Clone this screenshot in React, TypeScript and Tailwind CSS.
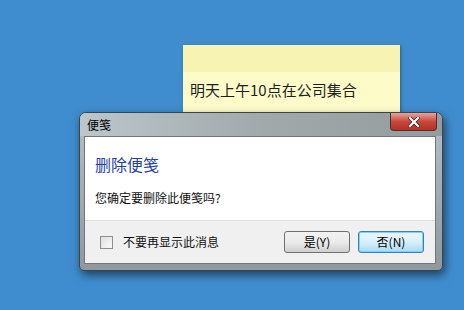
import React from "react";

const font = { fontFamily: '"Noto Sans CJK SC", "Noto Sans", sans-serif' };

export default function App() {
  return (
    <div
      className="relative w-[464px] h-[310px] overflow-hidden bg-[#3f8dcf]"
      style={font}
    >
      {/* sticky note */}
      <div className="absolute left-[183px] top-[45px] w-[217px] h-[80px] flex flex-col shadow-[1px_1px_3px_rgba(0,0,0,0.35)]">
        <div className="h-[27px] bg-[#f7f3b3]" />
        <div className="flex-1 bg-[#fdfcc9] pl-[7px] pt-[8px] text-[15px] leading-[20px] text-[#1e1e1e]">
          明天上午10点在公司集合
        </div>
      </div>

      {/* dialog window */}
      <div className="absolute left-[79px] top-[112px] w-[364px] h-[159px] rounded-t-[7px] rounded-b-[5px] border border-[#3d4448] bg-gradient-to-b from-[#b5c0c6] via-[#a3acb0] to-[#8f989c] shadow-[2px_4px_10px_rgba(0,0,0,0.55)] flex flex-col">
        {/* title bar */}
        <div className="relative h-[23px] flex items-center pl-[7px] text-[12px] text-black bg-gradient-to-r from-[#bcc6cb] via-[#a1a9ab] to-[#959c9e] rounded-t-[6px]">
          <span className="pt-[1px]">便笺</span>
          <div className="absolute right-[5px] top-0 w-[47px] h-[18px] rounded-b-[4px] border border-t-0 border-[#5a2a25] bg-gradient-to-b from-[#e6a49b] via-[#c9473d] to-[#b23226] flex items-center justify-center">
            <svg width="12" height="10" viewBox="0 0 12 10">
              <path d="M2 1 L10 9 M10 1 L2 9" stroke="#3a1a16" strokeWidth="3.6" strokeLinecap="square" />
              <path d="M2 1 L10 9 M10 1 L2 9" stroke="#ffffff" strokeWidth="2.2" strokeLinecap="square" />
            </svg>
          </div>
        </div>
        {/* client area */}
        <div className="mx-[4px] mr-[6px] mb-[6px] flex-1 flex flex-col border border-[#6f777b] bg-white">
          <div className="flex-1 flex flex-col pl-[10px] bg-white">
            <div className="mt-[17px] text-[16px] leading-[20px] text-[#1f3fa6]">删除便笺</div>
            <div className="mt-[16px] text-[12px] leading-[16px] text-[#111]">您确定要删除此便笺吗?</div>
          </div>
          <div className="h-[43px] bg-[#f0f0f0] border-t border-[#dfdfdf] flex items-center pl-[15px] pr-[11px]">
            <div className="w-[13px] h-[13px] border border-[#8e8f8f] bg-gradient-to-br from-[#dcdcdc] to-[#fbfbfb] p-[2px]">
              <div className="w-full h-full bg-gradient-to-br from-[#e4e4e4] to-[#f7f7f7]" />
            </div>
            <span className="ml-[10px] text-[12px] text-[#111]">不要再显示此消息</span>
            <div className="flex-1" />
            <button className="w-[66px] h-[22px] rounded-[3px] border border-[#707070] bg-gradient-to-b from-[#f2f2f2] via-[#ebebeb] to-[#cfcfcf] text-[12px] text-black flex items-center justify-center">
              是(Y)
            </button>
            <button className="ml-[8px] w-[66px] h-[22px] rounded-[3px] border border-[#3c7fb1] bg-gradient-to-b from-[#eaf6fd] via-[#d9f0fc] to-[#a7d9f5] shadow-[inset_0_0_0_1px_#7fd1f5] text-[12px] text-black flex items-center justify-center">
              否(N)
            </button>
          </div>
        </div>
      </div>
    </div>
  );
}
